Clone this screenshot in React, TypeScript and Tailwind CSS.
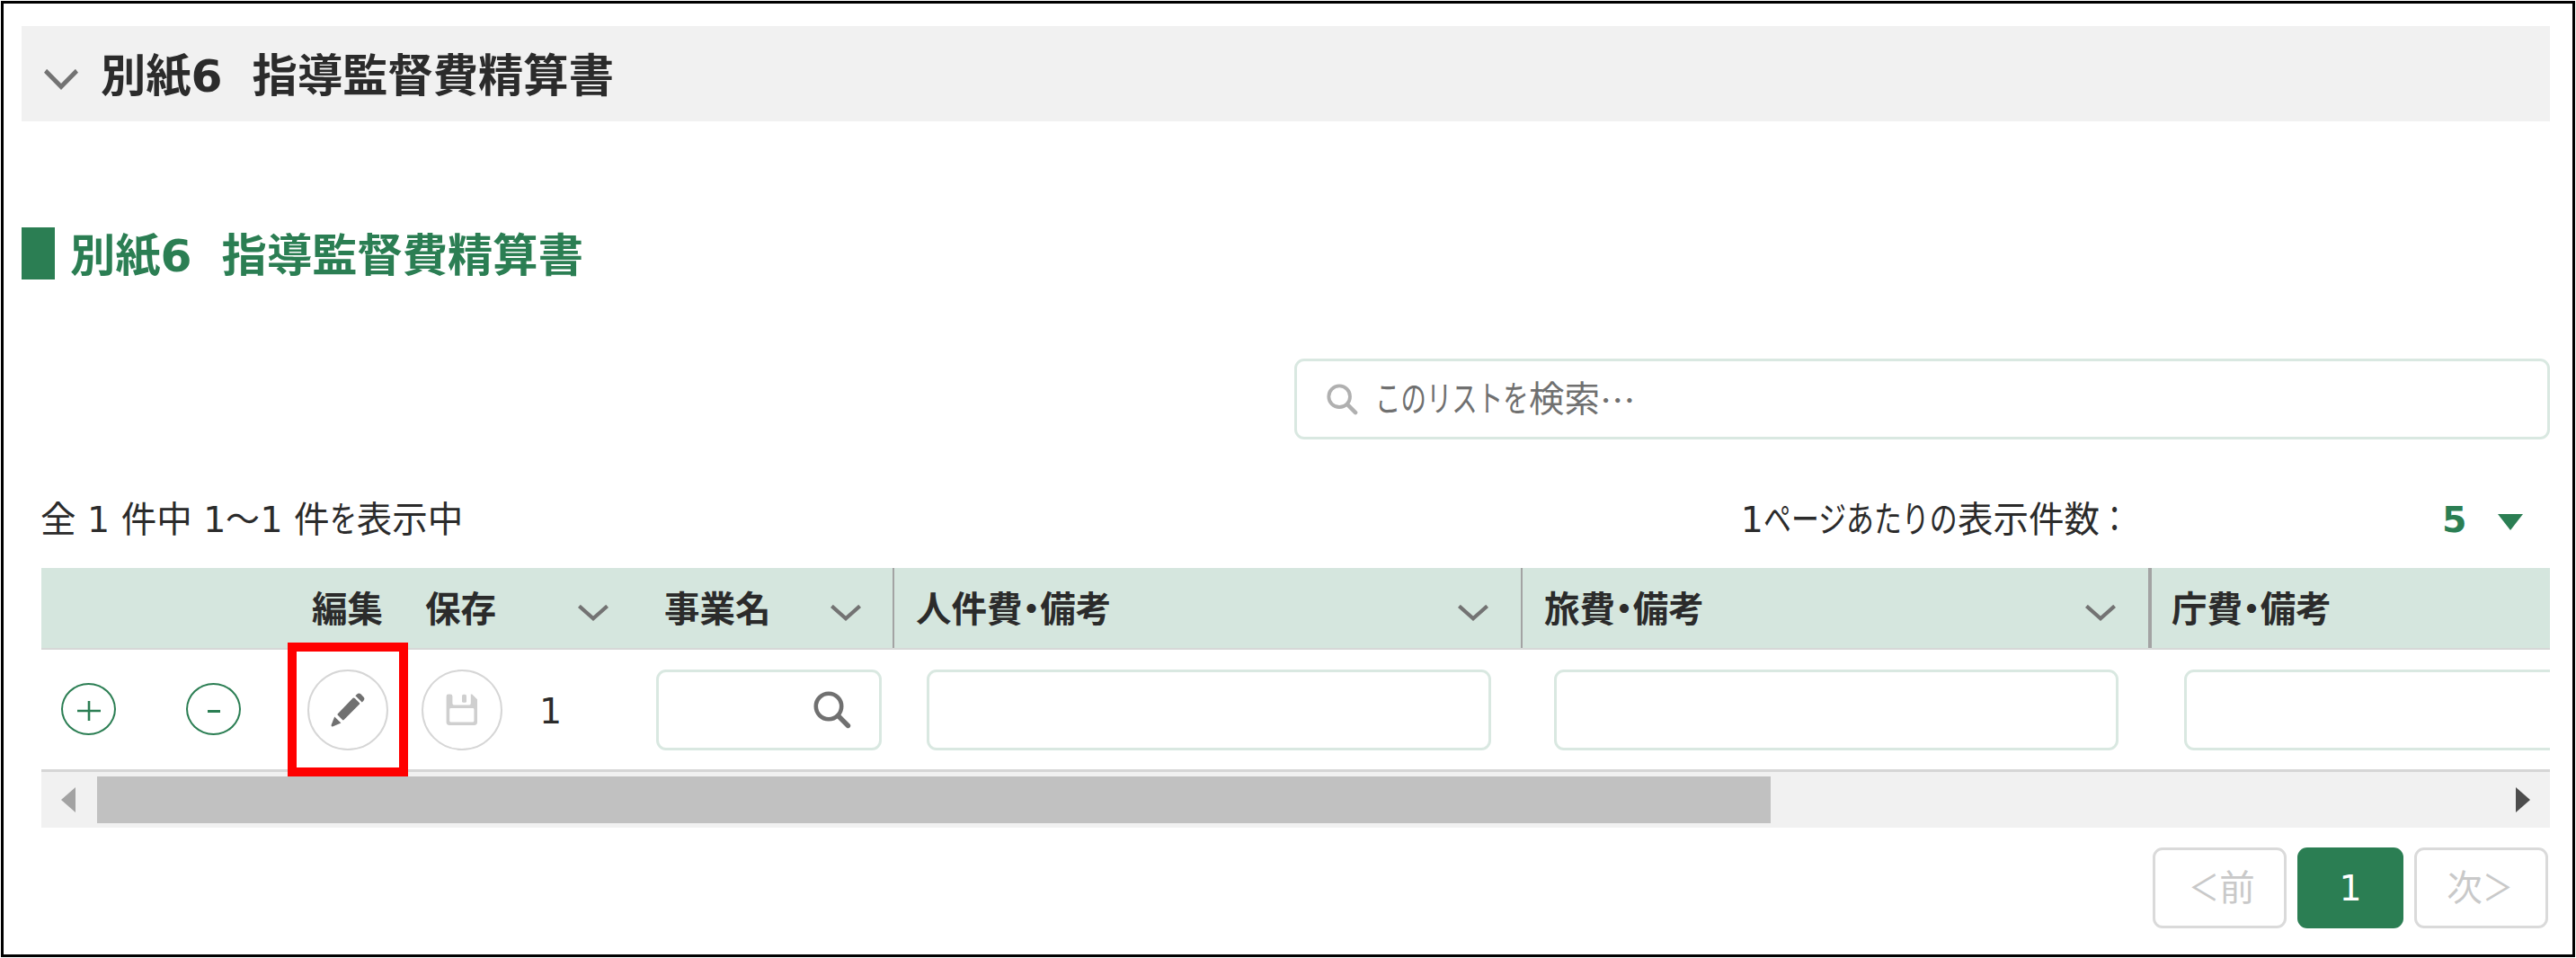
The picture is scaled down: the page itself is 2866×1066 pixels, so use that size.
import { ReactNode } from 'react';

const columns = [
  {
    name: '人件費',
    head: 'w-[699px] border-r-2 pl-6',
    cell: 'w-[699px] pl-9',
    input: 'w-[628px]',
    sortable: true,
  },
  {
    name: '旅費',
    head: 'w-[700px] border-r-4 pl-6',
    cell: 'w-[700px] pl-[35px]',
    input: 'w-[628px]',
    sortable: true,
  },
  {
    name: '庁費',
    head: 'w-[700px] pl-[22px]',
    cell: 'w-[700px] pl-9',
    input: 'w-[628px]',
    sortable: false,
  },
];

function Chevron({ className }: { className: string }) {
  return (
    <svg viewBox="0 0 34 18" preserveAspectRatio="none" className={className} fill="none" stroke="#737373" strokeWidth="4.2">
      <path d="M1.4 1.4 L17 15.2 L32.6 1.4" />
    </svg>
  );
}

function SearchIcon({ className }: { className: string }) {
  return (
    <svg viewBox="0 0 42 42" className={className} fill="none" stroke="currentColor" strokeLinecap="round">
      <circle cx="17" cy="17" r="14.2" strokeWidth="4.6" />
      <path d="M27.5 27.5 L38.5 38.5" strokeWidth="5.4" />
    </svg>
  );
}

function PencilIcon() {
  return (
    <svg viewBox="0 0 38 38" className="h-[38px] w-[38px]" fill="#707070">
      <path d="M27.4 3.2 L29.2 1.4 Q31.4 -0.4 33.6 1.6 L36.4 4.4 Q38.4 6.6 36.4 8.8 L34.8 10.4 Z" />
      <path d="M25.4 5.4 Q26.2 5.4 26.8 6 L32 11.2 Q32.6 12 32 12.6 L14.6 30 Q13.8 30.8 13 30 L7.8 24.8 Q7 24 7.8 23.2 L24.6 5.8 Z" />
      <path d="M4.2 26.4 L11.4 33.4 L2 37.4 Q0.2 37.6 0.6 35.8 Z" />
    </svg>
  );
}

function SaveIcon() {
  return (
    <svg viewBox="0 0 36 36" className="h-9 w-9">
      <path
        d="M2.6 0.6 H5 Q7.4 0.6 7.4 3 V10.4 Q7.4 12.6 9.6 12.6 H25.6 Q27.8 12.6 27.8 10.4 V0.6 H29.2 L35 6.2 V31.6 Q35 35 31.6 35 H4 Q0.6 35 0.6 31.6 V3 Q0.6 0.6 2.6 0.6 Z M5.6 16 Q4.2 16 4.2 17.4 V30 Q4.2 31.6 5.8 31.6 H29.8 Q31.4 31.6 31.4 30 V17.4 Q31.4 16 30 16 Z"
        fill="#cfcfcf"
        fillRule="evenodd"
      />
      <rect x="18" y="0.8" width="5" height="9" rx="1.6" fill="#cfcfcf" />
    </svg>
  );
}

function Title() {
  return (
    <>
      別紙6<span className="inline-block w-[33px] origin-left scale-x-[.65]">　</span>指導監督費精算書
    </>
  );
}

function RoundButton({ children }: { children: ReactNode }) {
  return (
    <button className="mb-[2px] flex h-[58px] w-[61px] items-center justify-center rounded-[50%] border-2 border-[#2b7e53]">
      {children}
    </button>
  );
}

export default function App() {
  return (
    <div className="h-[1066px] w-[2866px] bg-white p-px font-['DejaVu_Sans','Noto_Sans_CJK_JP',sans-serif] text-[39.5px] leading-[50px] text-[#2b2b2b]">
      <div className="flex h-[1064px] w-[2864px] flex-col border-[3px] border-black pl-5 pr-[25px] pt-[25px]">
        {/* Collapsible section bar */}
        <div className="flex h-[106px] items-center bg-[#f1f1f1] pl-[25px]">
          <Chevron className="h-[23px] w-[38px] translate-y-[6px]" />
          <h1 className="ml-[25px] pt-[6px] text-[50.3px] font-bold leading-[60px]">
            <Title />
          </h1>
        </div>

        <div className="mt-[118px] flex h-[58px] items-center">
          <div className="h-full w-[37px] bg-[#2b7e53]" />
          <h2 className="ml-[17px] pt-[5px] text-[50.3px] font-bold leading-[60px] text-[#2b7e53]">
            <Title />
          </h2>
        </div>

        <div className="mt-[88px] flex h-[90px] w-[1397px] items-center self-end rounded-[11px] border-[3px] border-[#d9e8e1] pl-[33px] text-[#707070]">
          <SearchIcon className="h-[37px] w-[35px] text-[#b0b0b0]" />
          <p className="ml-[19px] flex whitespace-nowrap">
            <span className="inline-block w-[171px] origin-left scale-x-[.72]">このリストを</span>
            <span className="w-[79px]">検索</span>
            <span className="font-['Noto_Sans_CJK_JP']">…</span>
          </p>
        </div>

        <div className="ml-[21px] mt-[64px] flex h-[50px] whitespace-nowrap">
          <p>
            全 1 件中 1<span className="inline-block w-[38px] origin-left scale-x-[.96]">～</span>1 件
            <span className="inline-block w-[30px] origin-left scale-x-[.76]">を</span>表示中
          </p>
          <p className="ml-auto">
            1<span className="inline-block w-[216px] origin-left scale-x-[.782]">ページあたりの</span>表示件数
            <span className="inline-block w-[34px] origin-left scale-x-[.84]">：</span>
          </p>
          <p className="ml-[347px] w-[62px] font-bold text-[#2b7e53]">5</p>
          <svg viewBox="0 0 28 18" className="mr-[30px] mt-[19px] h-[18px] w-[28px]" fill="#2b7e53">
            <path d="M0 0 H28 L14 18 Z" />
          </svg>
        </div>

        <div className="ml-[22px] mt-[29px] overflow-hidden">
          <div className="flex h-[91px] w-[3060px] border-b-2 border-[#d6d8d7] bg-[#d5e6de] font-bold *:flex *:shrink-0 *:items-center *:border-[#a3a3a3] *:pt-[3px]">
            <div className="w-[139px]" />
            <div className="w-[149px]" />
            <div className="w-[124px] pl-[13px]">編集</div>
            <div className="w-[130px] pl-[15px]">保存</div>
            <div className="w-[138px] justify-end pr-[49px]">
              <Chevron className="h-[18px] w-[34px] translate-y-[4px]" />
            </div>
            <div className="w-[269px] justify-between border-r-2 pl-[13px] pr-[35px]">
              事業名
              <Chevron className="h-[18px] w-[34px] translate-y-[4px]" />
            </div>
            {columns.map((col) => (
              <div key={col.name} className={`justify-between pr-9 ${col.head}`}>
                <span className="[font-feature-settings:'halt']">{col.name}・備考</span>
                {col.sortable && <Chevron className="h-[18px] w-[34px] translate-y-[4px]" />}
              </div>
            ))}
          </div>

          <div className="flex h-[136px] w-[3060px] items-center border-b-[3px] border-[#d6d6d6] *:shrink-0">
            <div className="w-[139px] pl-[22px]">
              <RoundButton>
                <svg viewBox="0 0 26 22" className="mt-1 h-[22px] w-[26px]" stroke="#2b7e53" strokeWidth="2.6">
                  <path d="M0 11 H26 M13 0 V22" />
                </svg>
              </RoundButton>
            </div>
            <div className="w-[149px] pl-[22px]">
              <RoundButton>
                <span className="mt-[5px] h-[3px] w-[14px] bg-[#2b7e53]" />
              </RoundButton>
            </div>
            <div className="w-[124px] pl-2">
              <button className="relative flex h-[90px] w-[90px] items-center justify-center rounded-full border-2 border-[#d6d6d6]">
                <PencilIcon />
                <span className="absolute -left-6 -top-8 z-10 h-[149px] w-[134px] border-[10px] border-[#ff0000]" />
              </button>
            </div>
            <div className="w-[130px] pl-[11px]">
              <button className="flex h-[90px] w-[90px] items-center justify-center rounded-full border-2 border-[#d6d6d6]">
                <SaveIcon />
              </button>
            </div>
            <div className="w-[138px] pl-[12px] pt-[2px]">1</div>
            <div className="w-[269px] pl-1">
              <div className="flex h-[90px] w-[251px] items-center justify-end rounded-[11px] border-[3px] border-[#d9e8e1] pr-[31px]">
                <SearchIcon className="h-[42px] w-[42px] text-[#707070]" />
              </div>
            </div>
            {columns.map((col) => (
              <div key={col.name} className={col.cell}>
                <div className={`h-[90px] rounded-[11px] border-[3px] border-[#d9e8e1] ${col.input}`} />
              </div>
            ))}
          </div>

          {/* Horizontal scrollbar */}
          <div className="flex h-[62px] items-center bg-[#f1f1f1] pl-[22px] pr-[22px]">
            <svg viewBox="0 0 16 28" className="h-7 w-4" fill="#a3a3a3">
              <path d="M16 0 V28 L0 14 Z" />
            </svg>
            <div className="ml-6 h-[52px] w-[1862px] bg-[#c1c1c1]" />
            <svg viewBox="0 0 16 28" className="ml-auto h-7 w-4" fill="#4d4d4d">
              <path d="M0 0 V28 L16 14 Z" />
            </svg>
          </div>
        </div>

        <div className="mr-[2px] mt-[22px] flex h-[90px] justify-end gap-3 text-[#c9c9c9] *:flex *:items-center *:justify-center *:rounded-[11px]">
          <button className="w-[149px] border-[3px] border-[#dadada] pl-[5px]">
            <span className="inline-block w-[34px] origin-left scale-x-[.86]">＜</span>前
          </button>
          <button className="w-[118px] bg-[#2b7e53] text-white">1</button>
          <button className="w-[149px] border-[3px] border-[#dadada] pr-[3px]">
            次<span className="inline-block w-[34px] origin-left scale-x-[.86]">＞</span>
          </button>
        </div>
      </div>
    </div>
  );
}
